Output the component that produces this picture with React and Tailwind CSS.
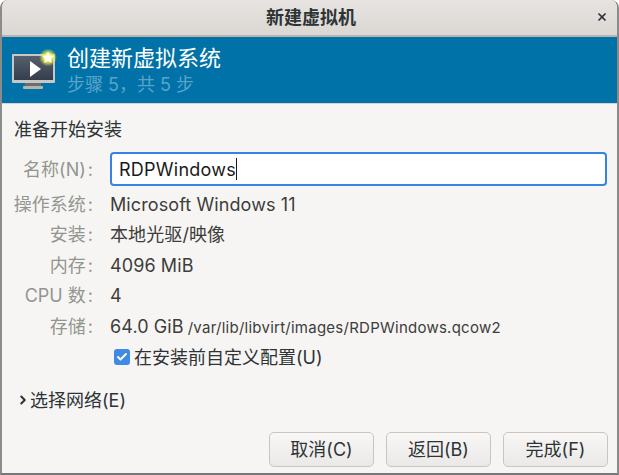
import React from "react";
import { Check, ChevronRight, X } from "lucide-react";

const font = "font-['Inter','Noto_Sans_CJK_SC',sans-serif]";

const VmIcon = () => (
  <svg width="46" height="44" viewBox="0 0 46 44" className="mb-[5px] shrink-0">
    <defs>
      <radialGradient id="glow">
        <stop offset="0.45" stopColor="#f4f04a" />
        <stop offset="1" stopColor="#f4f04a" stopOpacity="0" />
      </radialGradient>
      <linearGradient id="screen" x1="0" y1="0" x2="0" y2="1">
        <stop offset="0" stopColor="#56606e" />
        <stop offset="1" stopColor="#343d4b" />
      </linearGradient>
    </defs>
    <rect x="1" y="8" width="43" height="29" rx="1" fill="#c9c7c3" />
    <rect x="3" y="10" width="39" height="24" fill="url(#screen)" />
    <rect x="14" y="37" width="16" height="3" fill="#6d6d6b" />
    <rect x="12" y="40" width="20" height="3" rx="1" fill="#b5b3ae" />
    <path d="M19 15 L30 23 L19 31 Z" fill="#fff" />
    <g transform="translate(1 2.5)">
      <circle cx="36" cy="9" r="9" fill="url(#glow)" />
      <path d="M36 3 L37.8 7 L42 7.4 L38.8 10.2 L39.8 14.4 L36 12.2 L32.2 14.4 L33.2 10.2 L30 7.4 L34.2 7 Z" fill="#fff" />
    </g>
  </svg>
);

const Label = ({ text }) => (
  <span className="w-[91px] shrink-0 text-right text-[#93958f]">
    {text}
    <span className="ml-[2px]">:</span>
  </span>
);

const Row = ({ label, children }) => (
  <div className="flex h-[30.5px] items-center">
    <Label text={label} />
    <div className="ml-[17px] flex items-baseline tracking-[0.1px] text-[#3d3d3a]">{children}</div>
  </div>
);

const Btn = ({ children }) => (
  <button className="h-[35px] w-[105px] rounded-[5px] border border-[#c9c5bf] bg-gradient-to-b from-[#f8f7f6] to-[#ebe9e7] text-[18px] text-[#2e3436]">
    {children}
  </button>
);

export default function App() {
  return (
    <div className={`${font} flex h-[475px] w-[619px] flex-col overflow-hidden rounded-t-[8px] border-x-2 border-b-2 border-x-[#8b8b89] border-b-[#77777a] bg-[#f6f5f4] text-[18px]`}>
      {/* title bar */}
      <div className="relative flex h-[37px] shrink-0 items-center justify-center border-b-2 border-[#b9b5ae] bg-gradient-to-b from-[#e6e3e0] to-[#dbd8d4] pl-[3px]">
        <span className="text-[18px] font-bold text-[#2e3436]">新建虚拟机</span>
        <X size={12} strokeWidth={3.5} className="absolute right-[9px] top-[11px] text-[#2e3436]" />
      </div>

      {/* banner */}
      <div className="flex h-[67px] shrink-0 items-center gap-[10px] border-b border-[#d5d3cf] bg-[#0072a8] pl-[9px]">
        <VmIcon />
        <div className="flex flex-col">
          <span className="text-[22px] leading-[28px] text-white">创建新虚拟系统</span>
          <span className="mt-[2px] text-[18px] leading-[22px] text-[#5ba3cb]">步骤 5，共 5 步</span>
        </div>
      </div>

      {/* body */}
      <div className="flex flex-1 flex-col">
        <div className="mt-[15px] pl-[12px] leading-[22px] text-[#2e3436]">准备开始安装</div>

        <div className="mt-[11px] flex h-[34px] items-center">
          <Label text="名称(N)" />
          <div className="ml-[17px] flex h-[34px] w-[497px] items-center rounded-[4px] border-2 border-[#3584e4] bg-white pl-[7px] tracking-[0.25px] text-[#1a1a1a]">
            RDPWindows
            <span className="h-[22px] w-px bg-[#1a1a1a]" />
          </div>
        </div>

        <div className="mt-[3px] flex flex-col">
          <Row label="操作系统">Microsoft Windows 11</Row>
          <Row label="安装">本地光驱/映像</Row>
          <Row label="内存">4096 MiB</Row>
          <Row label="CPU 数">4</Row>
          <Row label="存储">
            64.0 GiB
            <span className="ml-1 text-[15px] tracking-[0.25px]">/var/lib/libvirt/images/RDPWindows.qcow2</span>
          </Row>
        </div>

        <div className="mt-[2px] flex items-center pl-[112px] text-[#2e3436]">
          <span className="flex h-4 w-4 items-center justify-center rounded-[3px] bg-[#3f8ae2]">
            <Check size={12} strokeWidth={4} className="text-white" />
          </span>
          <span className="ml-[4px]">在安装前自定义配置(U)</span>
        </div>

        <div className="mt-[16px] flex items-center pl-[14px] text-[#2e3436]">
          <ChevronRight size={14} strokeWidth={3.5} className="text-[#2e3436]" />
          <span>选择网络(E)</span>
        </div>

        <div className="mt-[18px] flex justify-end gap-[12px] pr-[9px]">
          <Btn>取消(C)</Btn>
          <Btn>返回(B)</Btn>
          <Btn>完成(F)</Btn>
        </div>
      </div>
    </div>
  );
}
